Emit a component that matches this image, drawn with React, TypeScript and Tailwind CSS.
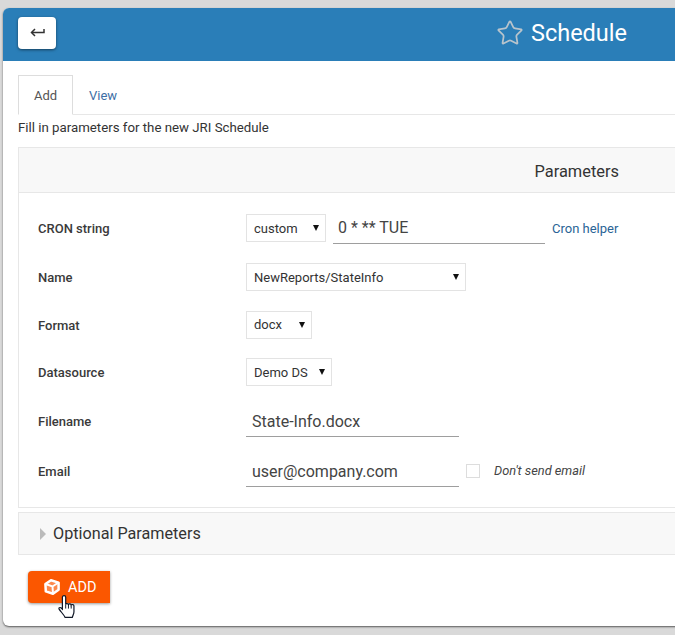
import { Star } from 'lucide-react';

const inputClass =
  'h-[30px] border-b border-[#9e9e9e] bg-transparent text-[16px] text-[#444] outline-none';

const Label = ({ text }: { text: string }) => (
  <label className="w-[208px] shrink-0 text-[13px] font-medium text-[#3a3a3a]">{text}</label>
);

const Dropdown = ({ value, width, textClass = 'pt-[2px]' }: { value: string; width: string; textClass?: string }) => (
  <div className={`relative mb-[2px] h-[28px] ${width}`}>
    <select
      className={`h-full w-full appearance-none border border-[#e3e3e3] bg-white pl-[7px] text-[13px] text-[#333] outline-none ${textClass}`}
      defaultValue={value}
    >
      <option>{value}</option>
    </select>
    <span className="pointer-events-none absolute right-[7px] top-[11px] h-0 w-0 border-x-[3.5px] border-t-[6px] border-x-transparent border-t-[#111]" />
  </div>
);

const App = () => {
  return (
    <div className="h-[635px] w-[675px] overflow-hidden bg-[#d9d9d9] pl-[3px] pt-[8px] font-['Roboto',sans-serif]">
      <div className="relative h-[618px] w-[700px] overflow-hidden rounded-l-[6px] bg-white shadow-[0_1px_2px_rgba(0,0,0,0.6)]">
        {/* Header */}
        <div className="flex h-[53px] items-center justify-between bg-[#2a7eb8] pb-[3px] pl-[15px] pr-[76px]">
          <button className="flex h-[32px] w-[38px] items-center justify-center rounded-[4px] bg-white shadow-[0_1px_3px_rgba(0,0,0,0.5)]">
            <svg width="15" height="10" viewBox="0 0 15 10" fill="none" stroke="#333" strokeWidth="1.5">
              <path d="M14 1v3.5H2" />
              <path d="M5 1 1.5 4.5 5 8" />
            </svg>
          </button>
          <div className="flex items-center gap-[7px]">
            <Star className="h-[28px] w-[28px] text-[#b8c4cc]" strokeWidth={1.5} />
            <h1 className="pt-[2px] text-[23.5px] text-white">Schedule</h1>
          </div>
        </div>

        <div className="pl-[15px] pt-[14px]">
          {/* Tabs */}
          <div className="flex h-[40px] border-b border-[#e7e7e7] text-[13px]">
            <div className="-mb-px flex w-[55px] items-center justify-center border border-[#dddddd] border-b-white bg-white pt-[2px] text-[#555]">
              Add
            </div>
            <div className="flex w-[60px] items-center justify-center pt-[2px] text-[#3d6ea5]">View</div>
          </div>
          <p className="mt-[4px] text-[13.25px] leading-[18px] text-[#333]">Fill in parameters for the new JRI Schedule</p>

          {/* Parameters */}
          <div className="mt-[10px] border border-[#e7e7e7]">
            <div className="flex h-[45px] items-center justify-end border-b border-[#e7e7e7] bg-[#f8f8f8] pr-[83px] pt-[4px] text-[16.4px] text-[#333]">
              Parameters
            </div>
            <div className="box-border h-[314px] pl-[19px] pt-[21px]">
              <div className="flex h-[30px] items-center">
                <Label text="CRON string" />
                <Dropdown value="custom" width="w-[80px]" />
                <input className={`${inputClass} ml-[7px] w-[212px] px-[5px] pb-[2px]`} defaultValue="0 * ** TUE" />
                <a className="ml-[7px] text-[13px] text-[#2a6496]">Cron helper</a>
              </div>
              <div className="mt-[19px] flex h-[30px] items-center">
                <Label text="Name" />
                <Dropdown value="NewReports/StateInfo" width="w-[220px]" />
              </div>
              <div className="mt-[18px] flex h-[30px] items-center">
                <Label text="Format" />
                <Dropdown value="docx" width="w-[66px]" textClass="pt-0" />
              </div>
              <div className="mt-[17px] flex h-[30px] items-center">
                <Label text="Datasource" />
                <Dropdown value="Demo DS" width="w-[86px]" />
              </div>
              <div className="mt-[19px] flex h-[30px] items-center">
                <Label text="Filename" />
                <input className={`${inputClass} w-[213px] px-[6px]`} defaultValue="State-Info.docx" />
              </div>
              <div className="mt-[20px] flex h-[30px] items-center">
                <Label text="Email" />
                <input className={`${inputClass} w-[213px] px-[6px]`} defaultValue="user@company.com" />
                <span className="mb-[2px] ml-[7px] h-[14px] w-[14px] border border-[#dddddd] bg-white" />
                <span className="mb-[2px] ml-[14px] text-[12.8px] italic text-[#444]">Don't send email</span>
              </div>
            </div>
          </div>

          {/* Optional parameters */}
          <div className="mt-[4px] flex h-[43px] items-center border border-[#e7e7e7] bg-[#f8f8f8] pl-[21px] text-[16.2px] text-[#333]">
            <span className="mr-[7px] h-0 w-0 border-y-[6px] border-l-[6px] border-y-transparent border-l-[#bbbbbb]" />
            <span className="pt-[2px]">Optional Parameters</span>
          </div>

          <button className="ml-[10px] mt-[16px] flex h-[32px] w-[82px] items-center gap-[8px] rounded-l-[4px] bg-[#fb5700] pl-[16px] text-[14.5px] text-white shadow-[0_1px_3px_rgba(0,0,0,0.4)]">
            <svg width="16" height="16" viewBox="0 0 16 16" fill="none" stroke="#fff">
              <path d="M7 1.2 14.6 3.6 14.6 10.8 9 14.8 1.8 12.4 1.4 5z" strokeWidth="2.5" strokeLinejoin="round" fill="#fff" fillOpacity="0.3" />
              <path d="M1.5 5 8.5 7.5 14.5 3.5M8.5 7.5 9 15" strokeWidth="2" />
            </svg>
            <span className="pt-[1px]">ADD</span>
          </button>
        </div>

        {/* Mouse pointer */}
        <svg className="absolute left-[55px] top-[586px]" width="22" height="25" viewBox="0 0 20 24" preserveAspectRatio="none">
          <path
            d="M5.5 1.5c1 0 1.5.7 1.5 1.6V10c.3-1 2.2-1 2.5.2.4-1 2.3-.9 2.5.4.5-.8 2.3-.6 2.5.7V17c0 2-1 3.5-1.5 5.5H6.5C5.5 20 2.5 17 1 14.5c-.5-1 .6-2 1.6-1.3L4 14.5V3.1c0-.9.6-1.6 1.5-1.6z"
            fill="#fff"
            stroke="#111827"
            strokeWidth="1.1"
          />
          <path d="M7 10v4M9.5 10.5V14M12 11v3" stroke="#111827" strokeWidth="0.9" fill="none" />
        </svg>
      </div>
    </div>
  );
};

export default App;
